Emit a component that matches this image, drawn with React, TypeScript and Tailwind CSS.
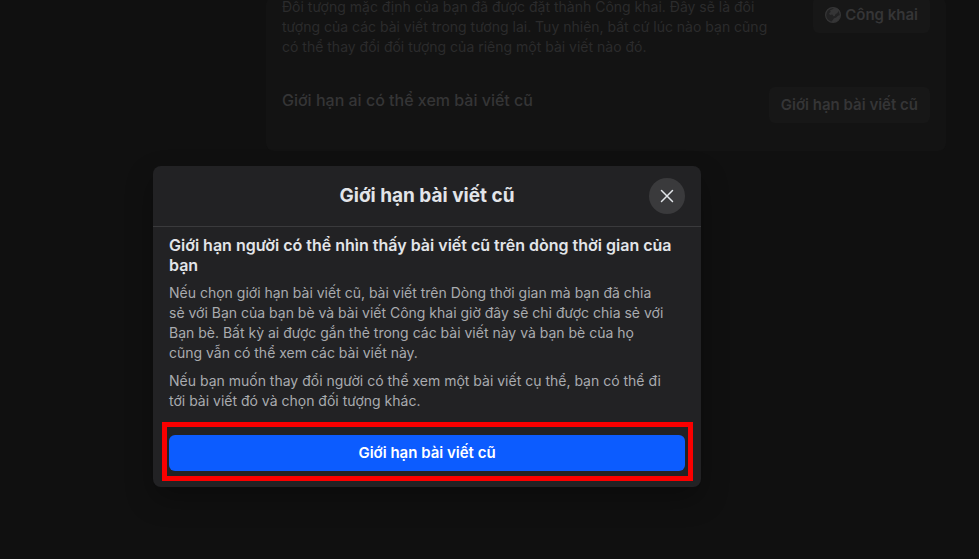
import { useId } from "react";

/** Globe used for the "public" audience. */
function GlobeIcon() {
  return (
    <svg width="16" height="16" viewBox="0 0 16 16" aria-hidden="true">
      <circle cx="8" cy="8" r="7.4" fill="currentColor" fillOpacity="0.4" stroke="currentColor" strokeWidth="1.2" />
      <path
        fill="currentColor"
        d="M9.500.8 7.200 2.600 5.200 3l.4 2-1.500 1.300.8 1.600 2.300-.4 1.400 1.700 1.300-.3.700-2 1.700-.6 1-2 1.500-.9A7.400 7.400 0 0 0 9.500.8z"
      />
      <path fill="currentColor" d="m15.300 8-2.300.8-1.800 1.700-2.400.9-2.300 3.400c4 1.300 8.600-1.300 8.800-6.800z" />
    </svg>
  );
}

/** Dimmed settings card behind the dialog. */
function PostSettings() {
  return (
    <section className="-mt-[3px] rounded-lg bg-[#131313] px-4 pb-7 text-[#353536]">
      <div className="flex items-start justify-between">
        <p className="text-sm leading-5 text-[#2b2b2c]">
          Đối tượng mặc định của bạn đã được đặt thành Công khai. Đây sẽ là đối
          <br />
          tượng của các bài viết trong tương lai. Tuy nhiên, bất cứ lúc nào bạn cũng
          <br />
          có thể thay đổi đối tượng của riêng một bài viết nào đó.
        </p>
        <button className="flex h-9 shrink-0 items-center gap-1 rounded-md bg-[#171717] px-3 text-[15px] font-semibold">
          <GlobeIcon />
          Công khai
        </button>
      </div>
      <div className="mt-[30px] flex items-start justify-between">
        <h2 className="pt-[3px] text-base leading-5 font-medium">Giới hạn ai có thể xem bài viết cũ</h2>
        <button className="h-9 shrink-0 rounded-md bg-[#171717] px-3 text-[15px] font-semibold">
          Giới hạn bài viết cũ
        </button>
      </div>
    </section>
  );
}

function LimitDialog() {
  const titleId = useId();

  return (
    <div
      role="dialog"
      aria-labelledby={titleId}
      className="w-full max-w-[548px] rounded-lg bg-[#222224] shadow-[0_12px_28px_rgba(0,0,0,0.3)]"
    >
      <header className="grid h-[61px] grid-cols-[36px_1fr_36px] items-center border-b border-[#3a3a3c] px-4">
        <h1 id={titleId} className="col-start-2 text-center text-[19px] font-bold text-[#e2e5e9]">
          Giới hạn bài viết cũ
        </h1>
        <button
          aria-label="Đóng"
          className="flex size-9 items-center justify-center rounded-full bg-[#3a3a3c] text-[#e2e5e9]"
        >
          <svg width="14" height="14" viewBox="0 0 14 14" stroke="currentColor" strokeWidth="1.5" aria-hidden="true">
            <path d="m1.500 1.500 11 11M12.500 1.500l-11 11" strokeLinecap="round" />
          </svg>
        </button>
      </header>
      <div className="flex flex-col gap-2 px-4 pt-2 pb-4 text-sm leading-5 text-[#a9abaf]">
        <h2 className="text-base leading-5 font-semibold text-[#e2e5e9]">
          Giới hạn người có thể nhìn thấy bài viết cũ trên dòng thời gian của
          <br />
          bạn
        </h2>
        <p>
          Nếu chọn giới hạn bài viết cũ, bài viết trên Dòng thời gian mà bạn đã chia
          <br />
          sẻ với Bạn của bạn bè và bài viết Công khai giờ đây sẽ chỉ được chia sẻ với
          <br />
          Bạn bè. Bất kỳ ai được gắn thẻ trong các bài viết này và bạn bè của họ
          <br />
          cũng vẫn có thể xem các bài viết này.
        </p>
        <p>
          Nếu bạn muốn thay đổi người có thể xem một bài viết cụ thể, bạn có thể đi
          <br />
          tới bài viết đó và chọn đối tượng khác.
        </p>
        <div className="relative mt-4">
          <button className="block h-9 w-full rounded-md bg-[#0c5cff] text-[15px] font-semibold text-white">
            Giới hạn bài viết cũ
          </button>
          <div className="pointer-events-none absolute -top-[13px] -right-2 -bottom-[10px] -left-[7px] border-5 border-[#fa0000]" />
        </div>
      </div>
    </div>
  );
}

export default function App() {
  return (
    <div className="relative min-h-screen overflow-hidden bg-[#101010] font-['Inter',sans-serif]">
      <main className="pr-[33px] pl-[266px]">
        <PostSettings />
      </main>
      <div className="absolute inset-0 flex items-start justify-center pt-[166px] pr-[125px]">
        <LimitDialog />
      </div>
    </div>
  );
}
